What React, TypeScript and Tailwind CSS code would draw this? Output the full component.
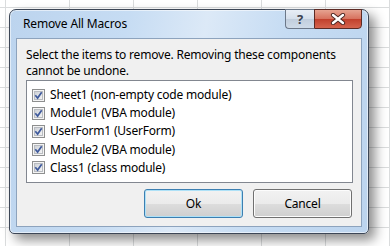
import React from "react";

const items = [
  "Sheet1 (non-empty code module)",
  "Module1 (VBA module)",
  "UserForm1 (UserForm)",
  "Module2 (VBA module)",
  "Class1 (class module)",
];

function CheckBox() {
  return (
    <svg width="13" height="13" viewBox="0 0 13 13" className="shrink-0">
      <defs>
        <linearGradient id="cbFill" x1="0" y1="0" x2="1" y2="1">
          <stop offset="0" stopColor="#cbcfd5" />
          <stop offset="1" stopColor="#f6f6f6" />
        </linearGradient>
      </defs>
      <rect x="0.5" y="0.5" width="12" height="12" fill="#f4f4f4" stroke="#8e8f8f" />
      <rect x="2.5" y="2.5" width="8" height="8" fill="url(#cbFill)" stroke="#b9bcc1" />
      <path d="M3.3 6.3 L5.6 9 L9.7 3.2" stroke="#3f5a9c" strokeWidth="1.7" fill="none" />
    </svg>
  );
}

export default function App() {
  return (
    <div className="w-[390px] h-[246px] overflow-hidden bg-white bg-[linear-gradient(to_right,#dadcdd_1px,transparent_1px),linear-gradient(to_bottom,#dadcdd_1px,transparent_1px)] bg-[size:64px_20px] bg-[position:5px_7px] pl-[9px] pt-[9px] font-['Noto_Sans',sans-serif] text-black">
      <div className="relative w-[360px] h-[225px] flex flex-col rounded-t-[7px] rounded-b-[5px] border border-[#3c4656] bg-[linear-gradient(100deg,#bcd4ee_0%,#c6dcf3_30%,#dce9f7_50%,#c6dcf3_70%,#bcd4ee_100%)] px-[6px] pb-[6px] shadow-[inset_0_0_0_1px_rgba(255,255,255,0.55),6px_6px_12px_rgba(0,0,0,0.45)]">
        <div className="h-[28px] flex items-center pl-[7px] text-[12px] tracking-[-0.15px]">Remove All Macros</div>

        <div className="absolute top-[-1px] right-[6px] flex">
          <div className="w-[29px] h-[20px] flex items-center justify-center rounded-bl-[4px] border border-r-0 border-[#6c7889] bg-[linear-gradient(to_bottom,#e8eef6_0%,#d5dfeb_50%,#c1cedd_51%,#cfdbe8_100%)] text-[13px] font-bold leading-none text-[#3b4250]">
            ?
          </div>
          <div className="w-[48px] h-[20px] flex items-center justify-center rounded-br-[4px] border border-[#5c2a24] bg-[linear-gradient(to_bottom,#e6a391_0%,#d7735f_48%,#c2412d_52%,#d5644e_100%)]">
            <svg width="16" height="12" viewBox="0 0 16 12">
              <path d="M3 2 L13 10 M13 2 L3 10" stroke="#4a2420" strokeWidth="4.2" strokeLinecap="round" />
              <path d="M3 2 L13 10 M13 2 L3 10" stroke="#ffffff" strokeWidth="2.4" strokeLinecap="round" />
            </svg>
          </div>
        </div>

        <div className="flex-1 flex flex-col border border-[#8da3bd] bg-[#f0f0f0] pl-[9px] pr-[8px] pt-[8px] text-[12px] tracking-[-0.2px]">
          <p className="leading-[16px]">
            Select the items to remove. Removing these components
            <br />
            cannot be undone.
          </p>

          <div className="mt-[1px] h-[103px] border border-[#828790] bg-white pl-[5px] pt-[5px]">
            {items.map((item) => (
              <div key={item} className="h-[18.2px] flex items-center gap-[5px]">
                <CheckBox />
                <span>{item}</span>
              </div>
            ))}
          </div>

          <div className="mt-[6px] flex justify-end gap-[10px] pr-[1px]">
            <button className="w-[99px] h-[29px] rounded-[3px] border border-[#3c7fb1] bg-[linear-gradient(to_bottom,#f2f2f2_0%,#ebebeb_50%,#dddddd_51%,#cfcfcf_100%)] shadow-[inset_0_0_0_1px_#aee1f7] text-[12px]">
              Ok
            </button>
            <button className="w-[99px] h-[29px] rounded-[3px] border border-[#707070] bg-[linear-gradient(to_bottom,#f2f2f2_0%,#ebebeb_50%,#dddddd_51%,#cfcfcf_100%)] shadow-[inset_0_0_0_1px_#fcfcfc] text-[12px]">
              Cancel
            </button>
          </div>
        </div>
      </div>
    </div>
  );
}
